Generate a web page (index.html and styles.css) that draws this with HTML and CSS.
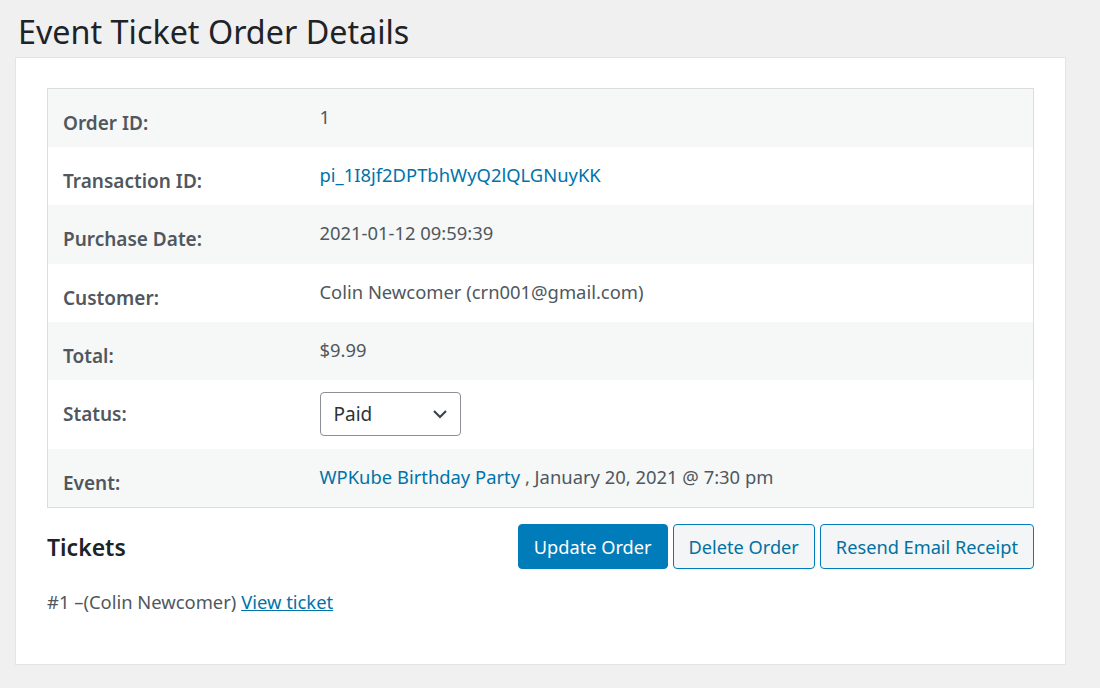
FILE: index.html
```html
<!DOCTYPE html>
<html lang="en">

<head>
  <meta charset="UTF-8">
  <title>Event Ticket Order Details</title>
  <link rel="stylesheet" href="styles.css">
</head>

<body>
  <div class="wrap">
    <h1>Event Ticket Order Details</h1>

    <div class="order-box">
      <table class="order-table">
        <tr>
          <th>Order ID:</th>
          <td>1</td>
        </tr>
        <tr>
          <th>Transaction ID:</th>
          <td><a href="#">pi_1I8jf2DPTbhWyQ2lQLGNuyKK</a></td>
        </tr>
        <tr>
          <th>Purchase Date:</th>
          <td>2021-01-12 09:59:39</td>
        </tr>
        <tr>
          <th>Customer:</th>
          <td>Colin Newcomer (crn001@gmail.com)</td>
        </tr>
        <tr>
          <th>Total:</th>
          <td>$9.99</td>
        </tr>
        <tr class="status-row">
          <th>Status:</th>
          <td>
            <div class="select">
              <span>Paid</span>
              <svg width="16" height="10" viewBox="0 0 16 10"><path d="M2 2l6 6 6-6" fill="none" stroke="#3c434a" stroke-width="2.2"/></svg>
            </div>
          </td>
        </tr>
        <tr>
          <th>Event:</th>
          <td><a href="#">WPKube Birthday Party</a> , January 20, 2021 @ 7:30 pm</td>
        </tr>
      </table>

      <div class="tickets-head">
        <h2>Tickets</h2>
        <div class="actions">
          <button class="btn primary">Update Order</button>
          <button class="btn">Delete Order</button>
          <button class="btn">Resend Email Receipt</button>
        </div>
      </div>

      <p class="ticket-line">#1 –(Colin Newcomer) <a href="#" class="ul">View ticket</a></p>
    </div>
  </div>
</body>

</html>
```

FILE: styles.css
```css
* {
  box-sizing: border-box;
}

body {
  margin: 0;
  background: #f0f0f1;
  font-family: "Noto Sans", "Open Sans", sans-serif;
  color: #3c434a;
}

.wrap {
  padding: 0 34px 0 15px;
}

h1 {
  margin: 0;
  padding: 11px 0 6px 3px;
  font-size: 32.3px;
  font-weight: 400;
  line-height: 40px;
  color: #1d2327;
}

.order-box {
  background: #fff;
  border: 1px solid #e2e4e7;
  padding: 30px 31px 50px;
}

.order-table {
  width: 100%;
  border-collapse: collapse;
  border: 1px solid #dcdcde;
}

.order-table tr {
  height: 58.3px;
}

.order-table tr:nth-child(odd) {
  background: #f6f7f7;
}

.order-table th,
.order-table td {
  vertical-align: top;
  font-size: 18.4px;
  line-height: 24px;
  text-align: left;
}

.order-table th {
  width: 272px;
  padding: 22px 0 12px 15px;
  font-size: 19px;
  font-weight: 600;
  color: #50575e;
}

.order-table td {
  padding: 16px 10px 12px 0;
  color: #50575e;
}

.order-table tr.status-row {
  height: 69px;
}

.order-table tr.status-row td {
  padding: 12px 0 12px 0;
}

a {
  color: #0073aa;
  text-decoration: none;
}

a.ul {
  text-decoration: underline;
}

.select {
  width: 141px;
  height: 44px;
  border: 1px solid #8c8f94;
  border-radius: 4px;
  display: flex;
  align-items: center;
  justify-content: space-between;
  padding: 0 12px 0 13px;
  color: #2c3338;
  font-size: 19px;
}

.tickets-head {
  display: flex;
  justify-content: space-between;
  align-items: center;
  margin-top: 16px;
}

h2 {
  margin: 0;
  font-size: 23px;
  font-weight: 600;
  color: #1d2327;
}

.actions {
  display: flex;
  gap: 5px;
}

.btn {
  font-family: inherit;
  font-size: 18.2px;
  height: 45px;
  padding: 0 15px;
  border: 1px solid #007cba;
  border-radius: 4px;
  background: #f3f5f6;
  color: #0071a1;
}

.btn.primary {
  background: #007cba;
  color: #fff;
}

.ticket-line {
  margin: 20px 0 0;
  font-size: 18.4px;
  color: #50575e;
}
```
